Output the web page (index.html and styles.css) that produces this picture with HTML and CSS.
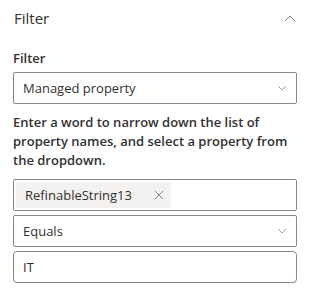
FILE: index.html
```html
<!DOCTYPE html>
<html lang="en">
  <head>
    <meta charset="UTF-8" />
    <title>Filter</title>
    <link rel="stylesheet" href="styles.css">
  </head>
  <body>
    <div class="filter-panel">
      <div class="panel-header">
        <span class="panel-title">Filter</span>
        <svg class="collapse-icon" width="12" height="7" viewBox="0 0 12 7">
          <path d="M1 6L6 1L11 6" stroke="#8a8886" stroke-width="1" fill="none" />
        </svg>
      </div>

      <label class="form__label">Filter</label>
      <div class="dropdown">
        <span class="dropdown__text">Managed property</span>
        <svg class="dropdown__chevron" width="10" height="6" viewBox="0 0 10 6">
          <path d="M1 1L5 5L9 1" stroke="#a19f9d" stroke-width="1" fill="none" />
        </svg>
      </div>

      <p class="field-help">
        Enter a word to narrow down the list of property names, and select a property from the dropdown.
      </p>

      <div class="picker">
        <span class="tag">
          <span class="tag__text">RefinableString13</span>
          <span class="tag__remove">
            <svg width="10" height="10" viewBox="0 0 10 10">
              <path d="M1 1L9 9M9 1L1 9" stroke="#8a8886" stroke-width="1" fill="none" />
            </svg>
          </span>
        </span>
      </div>

      <div class="dropdown dropdown--operator">
        <span class="dropdown__text">Equals</span>
        <svg class="dropdown__chevron" width="10" height="6" viewBox="0 0 10 6">
          <path d="M1 1L5 5L9 1" stroke="#a19f9d" stroke-width="1" fill="none" />
        </svg>
      </div>

      <div class="text-field">
        <span class="text-field__value">IT</span>
      </div>
    </div>
  </body>
</html>
```

FILE: styles.css
```css
body {
  margin: 0;
  background: #ffffff;
  font-family: "Open Sans", sans-serif;
  font-size: 13px;
  color: #323130;
}

.filter-panel {
  padding: 0 14px 0 13px;
}

.panel-header {
  display: flex;
  align-items: center;
  justify-content: space-between;
  height: 36px;
}

.panel-title {
  font-size: 15px;
  line-height: 20px;
  padding-left: 1px;
}

.collapse-icon {
  margin-right: 1px;
}

.form__label {
  display: block;
  margin-top: 12px;
  font-weight: 600;
  line-height: 20px;
  padding-bottom: 4px;
}

.dropdown,
.picker,
.text-field {
  box-sizing: border-box;
  display: flex;
  align-items: center;
  height: 32px;
  border: 1px solid #8a8886;
  border-radius: 2px;
}

.dropdown {
  justify-content: space-between;
  padding: 0 9px 0 9px;
}

.dropdown__text,
.text-field__value {
  line-height: 20px;
}

.field-help {
  margin: 9px 0 9px;
  font-weight: 600;
  line-height: 19px;
}

.picker {
  padding: 1px 2px;
}

.tag {
  display: flex;
  align-items: center;
  height: 26px;
  background: #f3f2f1;
  border-radius: 1px;
}

.tag__text {
  padding: 0 8px 0 9px;
  line-height: 20px;
}

.tag__remove {
  display: flex;
  align-items: center;
  justify-content: center;
  width: 24px;
  height: 26px;
  margin-left: 7px;
}

.dropdown--operator {
  margin-top: 4px;
}

.text-field {
  margin-top: 4px;
  padding: 0 9px;
  border-radius: 4px;
}
```
